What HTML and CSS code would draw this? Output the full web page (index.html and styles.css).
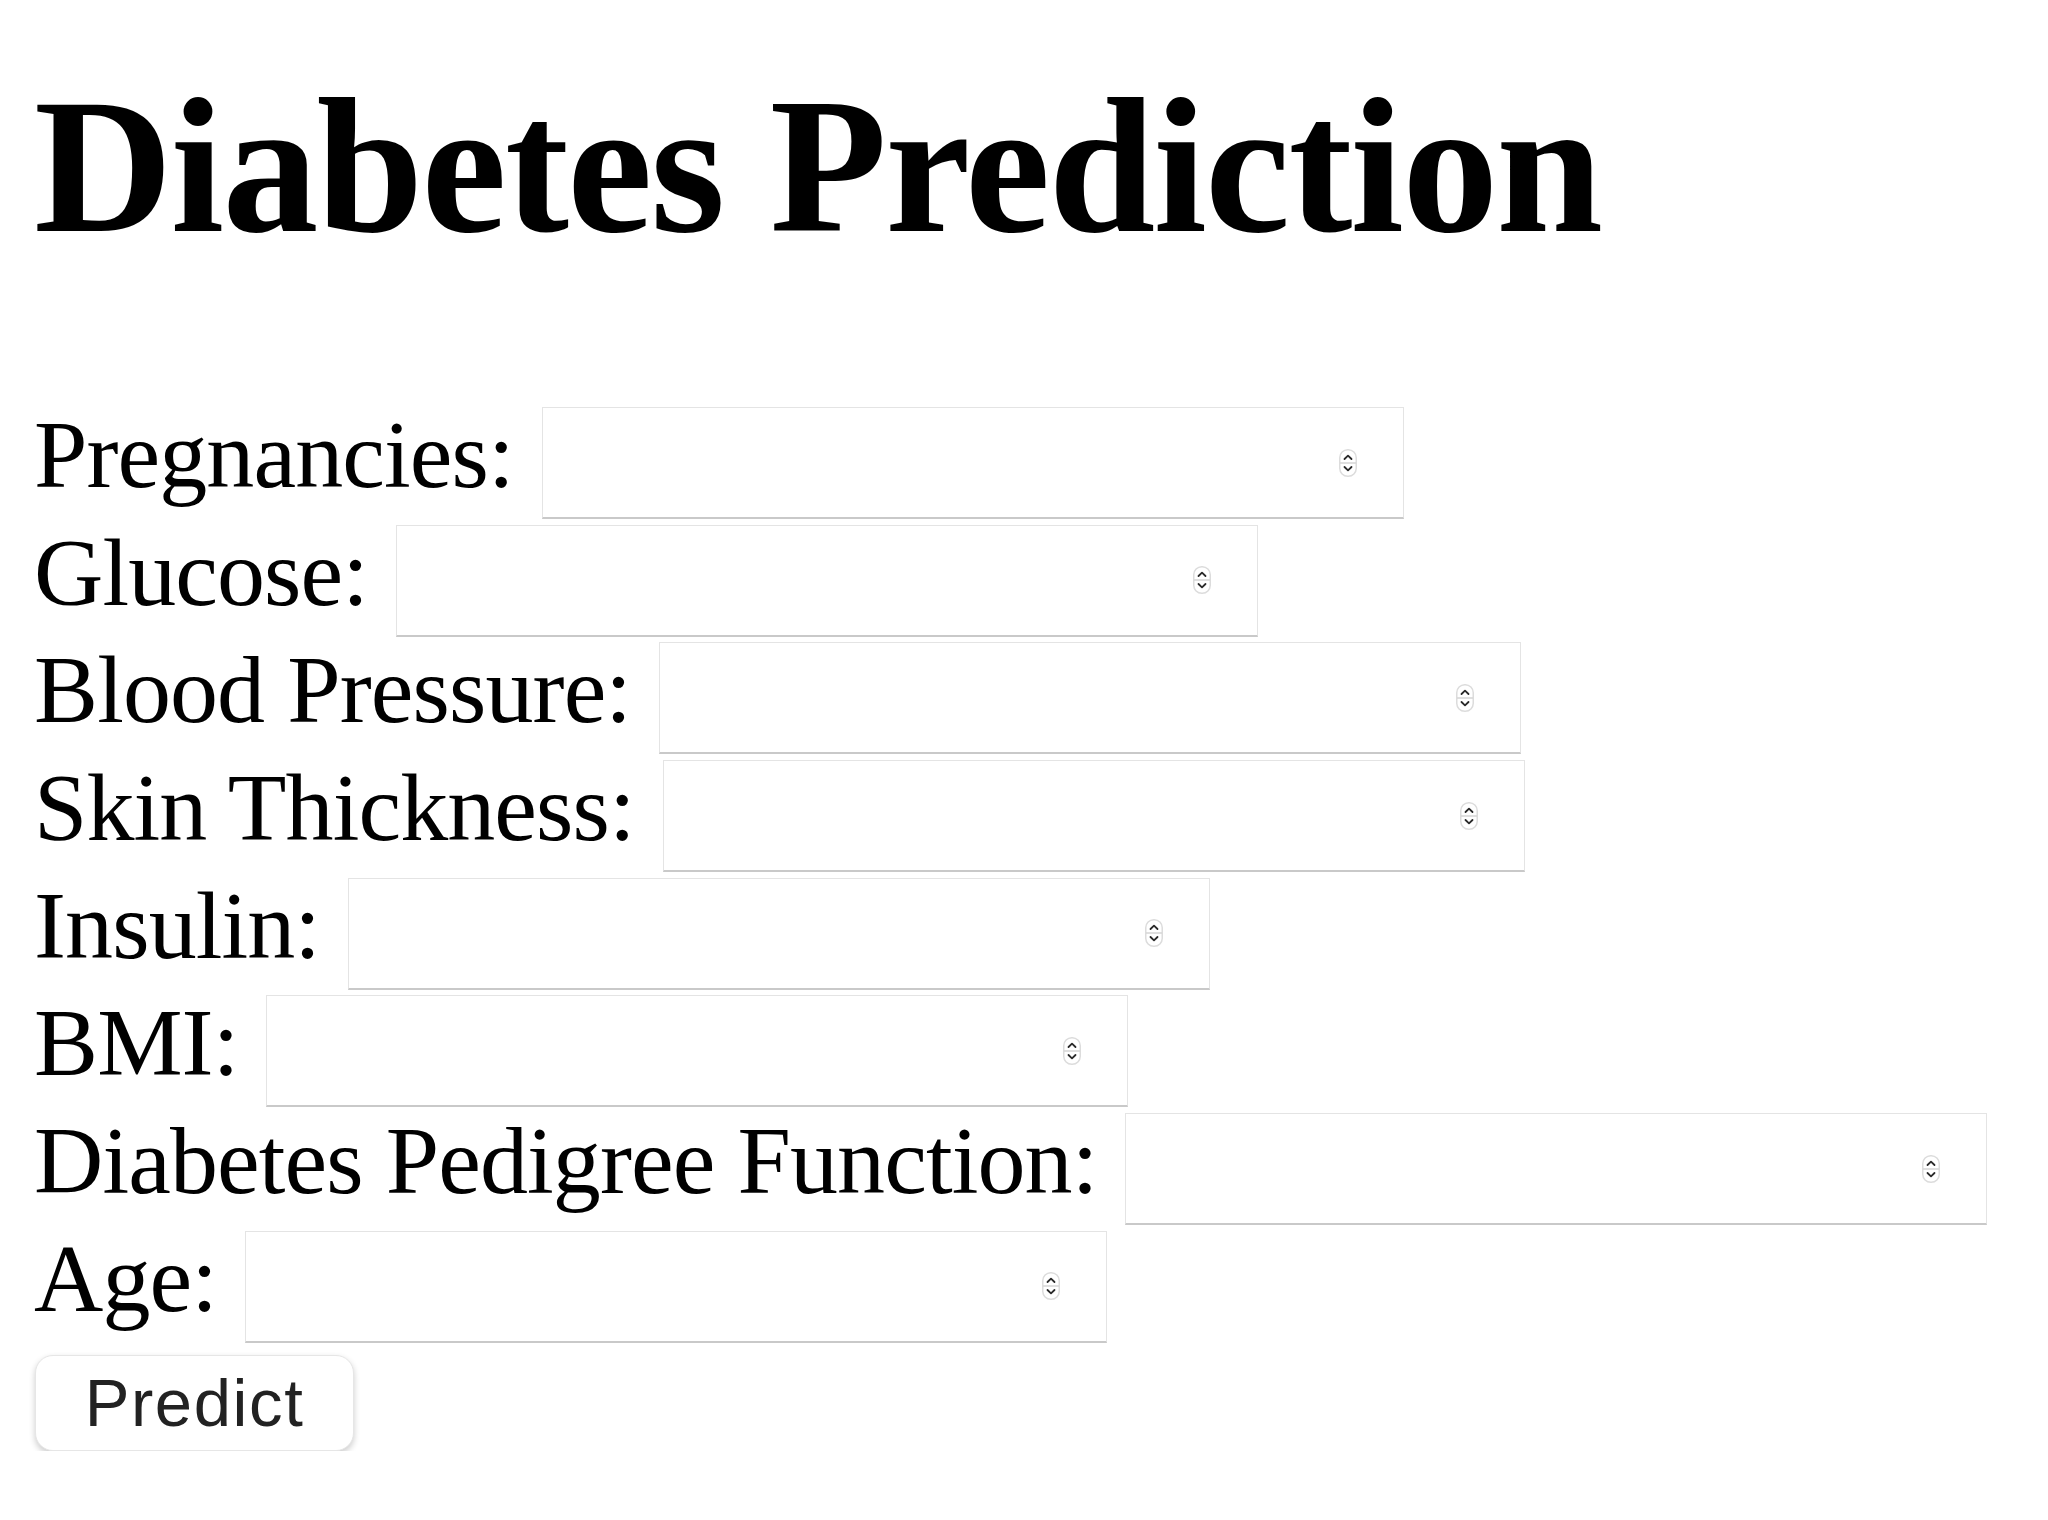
FILE: index.html
```html
<!DOCTYPE html>
<html lang="en">
<head>
<meta charset="utf-8">
<title>Diabetes Prediction</title>
<link rel="stylesheet" href="styles.css">
</head>
<body>
<h1 class="title">Diabetes Prediction</h1>
<form class="form">
  <div class="row"><label class="label" for="f1">Pregnancies:</label><span class="field"><input class="input" id="f1" type="text"><svg class="spin" viewBox="0 0 18 28"><rect x="0.75" y="0.75" width="16.5" height="26.5" rx="8" fill="#fff" stroke="#dcdcdc" stroke-width="1.5"/><line x1="1" y1="14" x2="17" y2="14" stroke="#d4d4d4" stroke-width="1.5"/><path d="M5.5 10 L9 6.6 L12.5 10" fill="none" stroke="#2a2a2a" stroke-width="1.8" stroke-linecap="round" stroke-linejoin="round"/><path d="M5.5 18 L9 21.4 L12.5 18" fill="none" stroke="#2a2a2a" stroke-width="1.8" stroke-linecap="round" stroke-linejoin="round"/></svg></span></div>
  <div class="row"><label class="label" for="f2">Glucose:</label><span class="field"><input class="input" id="f2" type="text"><svg class="spin" viewBox="0 0 18 28"><rect x="0.75" y="0.75" width="16.5" height="26.5" rx="8" fill="#fff" stroke="#dcdcdc" stroke-width="1.5"/><line x1="1" y1="14" x2="17" y2="14" stroke="#d4d4d4" stroke-width="1.5"/><path d="M5.5 10 L9 6.6 L12.5 10" fill="none" stroke="#2a2a2a" stroke-width="1.8" stroke-linecap="round" stroke-linejoin="round"/><path d="M5.5 18 L9 21.4 L12.5 18" fill="none" stroke="#2a2a2a" stroke-width="1.8" stroke-linecap="round" stroke-linejoin="round"/></svg></span></div>
  <div class="row"><label class="label" for="f3">Blood Pressure:</label><span class="field"><input class="input" id="f3" type="text"><svg class="spin" viewBox="0 0 18 28"><rect x="0.75" y="0.75" width="16.5" height="26.5" rx="8" fill="#fff" stroke="#dcdcdc" stroke-width="1.5"/><line x1="1" y1="14" x2="17" y2="14" stroke="#d4d4d4" stroke-width="1.5"/><path d="M5.5 10 L9 6.6 L12.5 10" fill="none" stroke="#2a2a2a" stroke-width="1.8" stroke-linecap="round" stroke-linejoin="round"/><path d="M5.5 18 L9 21.4 L12.5 18" fill="none" stroke="#2a2a2a" stroke-width="1.8" stroke-linecap="round" stroke-linejoin="round"/></svg></span></div>
  <div class="row"><label class="label" for="f4">Skin Thickness:</label><span class="field"><input class="input" id="f4" type="text"><svg class="spin" viewBox="0 0 18 28"><rect x="0.75" y="0.75" width="16.5" height="26.5" rx="8" fill="#fff" stroke="#dcdcdc" stroke-width="1.5"/><line x1="1" y1="14" x2="17" y2="14" stroke="#d4d4d4" stroke-width="1.5"/><path d="M5.5 10 L9 6.6 L12.5 10" fill="none" stroke="#2a2a2a" stroke-width="1.8" stroke-linecap="round" stroke-linejoin="round"/><path d="M5.5 18 L9 21.4 L12.5 18" fill="none" stroke="#2a2a2a" stroke-width="1.8" stroke-linecap="round" stroke-linejoin="round"/></svg></span></div>
  <div class="row"><label class="label" for="f5">Insulin:</label><span class="field"><input class="input" id="f5" type="text"><svg class="spin" viewBox="0 0 18 28"><rect x="0.75" y="0.75" width="16.5" height="26.5" rx="8" fill="#fff" stroke="#dcdcdc" stroke-width="1.5"/><line x1="1" y1="14" x2="17" y2="14" stroke="#d4d4d4" stroke-width="1.5"/><path d="M5.5 10 L9 6.6 L12.5 10" fill="none" stroke="#2a2a2a" stroke-width="1.8" stroke-linecap="round" stroke-linejoin="round"/><path d="M5.5 18 L9 21.4 L12.5 18" fill="none" stroke="#2a2a2a" stroke-width="1.8" stroke-linecap="round" stroke-linejoin="round"/></svg></span></div>
  <div class="row"><label class="label" for="f6">BMI:</label><span class="field"><input class="input" id="f6" type="text"><svg class="spin" viewBox="0 0 18 28"><rect x="0.75" y="0.75" width="16.5" height="26.5" rx="8" fill="#fff" stroke="#dcdcdc" stroke-width="1.5"/><line x1="1" y1="14" x2="17" y2="14" stroke="#d4d4d4" stroke-width="1.5"/><path d="M5.5 10 L9 6.6 L12.5 10" fill="none" stroke="#2a2a2a" stroke-width="1.8" stroke-linecap="round" stroke-linejoin="round"/><path d="M5.5 18 L9 21.4 L12.5 18" fill="none" stroke="#2a2a2a" stroke-width="1.8" stroke-linecap="round" stroke-linejoin="round"/></svg></span></div>
  <div class="row"><label class="label" for="f7">Diabetes Pedigree Function:</label><span class="field"><input class="input" id="f7" type="text"><svg class="spin" viewBox="0 0 18 28"><rect x="0.75" y="0.75" width="16.5" height="26.5" rx="8" fill="#fff" stroke="#dcdcdc" stroke-width="1.5"/><line x1="1" y1="14" x2="17" y2="14" stroke="#d4d4d4" stroke-width="1.5"/><path d="M5.5 10 L9 6.6 L12.5 10" fill="none" stroke="#2a2a2a" stroke-width="1.8" stroke-linecap="round" stroke-linejoin="round"/><path d="M5.5 18 L9 21.4 L12.5 18" fill="none" stroke="#2a2a2a" stroke-width="1.8" stroke-linecap="round" stroke-linejoin="round"/></svg></span></div>
  <div class="row"><label class="label" for="f8">Age:</label><span class="field"><input class="input" id="f8" type="text"><svg class="spin" viewBox="0 0 18 28"><rect x="0.75" y="0.75" width="16.5" height="26.5" rx="8" fill="#fff" stroke="#dcdcdc" stroke-width="1.5"/><line x1="1" y1="14" x2="17" y2="14" stroke="#d4d4d4" stroke-width="1.5"/><path d="M5.5 10 L9 6.6 L12.5 10" fill="none" stroke="#2a2a2a" stroke-width="1.8" stroke-linecap="round" stroke-linejoin="round"/><path d="M5.5 18 L9 21.4 L12.5 18" fill="none" stroke="#2a2a2a" stroke-width="1.8" stroke-linecap="round" stroke-linejoin="round"/></svg></span></div>
  <button class="button" type="button">Predict</button>
</form>
</body>
</html>
```
FILE: styles.css
```css
html, body {
  margin: 0;
  padding: 0;
  background: #ffffff;
}
body {
  padding: 71px 34px 0 34px;
  font-family: "Liberation Serif", "Times New Roman", serif;
  color: #000;
}
.title {
  margin: 0;
  font-size: 192px;
  line-height: 192px;
  font-weight: bold;
  letter-spacing: -1.8px;
  white-space: nowrap;
}
.form {
  margin-top: 144px;
  display: flex;
  flex-direction: column;
  align-items: flex-start;
  gap: 5.7px;
}
.row {
  display: flex;
  align-items: flex-start;
  height: 112px;
}
.label {
  font-size: 96px;
  line-height: 96px;
  letter-spacing: -0.9px;
  white-space: nowrap;
}
.field {
  margin-left: 28px;
  width: 862px;
  height: 112px;
  box-sizing: border-box;
  border: 1px solid #e4e4e4;
  border-bottom: 2px solid #c9c9c9;
  background: #fff;
  display: flex;
  align-items: center;
  padding-right: 46px;
}
.input {
  flex: 1;
  min-width: 0;
  height: 100%;
  border: 0;
  outline: none;
  background: transparent;
  padding: 0 12px;
  font-size: 60px;
}
.spin {
  width: 18px;
  height: 28px;
  flex: none;
}
.button {
  margin-top: 6px;
  margin-left: 1px;
  width: 319px;
  height: 96px;
  box-sizing: border-box;
  border: 1px solid #e6e6e6;
  border-radius: 18px;
  background: #ffffff;
  box-shadow: 0 3px 6px rgba(0, 0, 0, 0.2);
  font-family: "Liberation Sans", Arial, sans-serif;
  font-size: 67px;
  letter-spacing: 1.6px;
  color: #222222;
  padding: 0;
  cursor: pointer;
}
```
